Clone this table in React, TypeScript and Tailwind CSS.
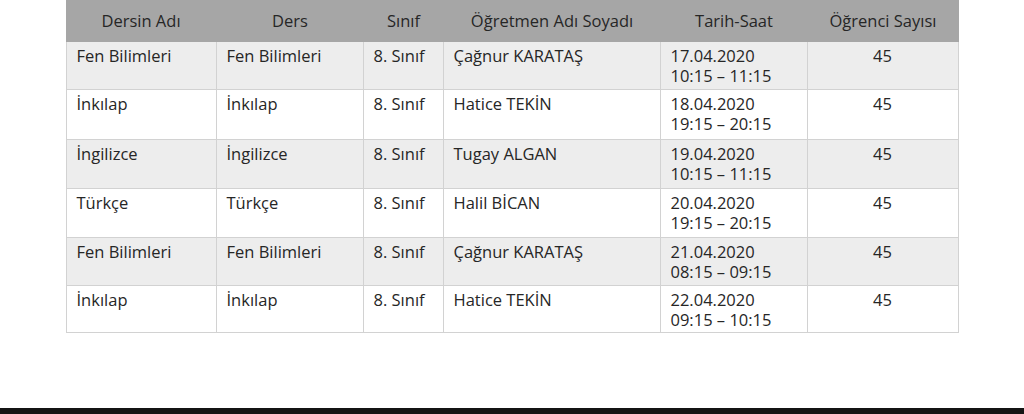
import React from "react";

const rows = [
  { a: "Fen Bilimleri", b: "Fen Bilimleri", t: "Çağnur KARATAŞ", d: "17.04.2020", h: "10:15 – 11:15", bg: "bg-[#ededed]", hh: "h-[48px]" },
  { a: "İnkılap", b: "İnkılap", t: "Hatice TEKİN", d: "18.04.2020", h: "19:15 – 20:15", bg: "bg-white", hh: "h-[50px]" },
  { a: "İngilizce", b: "İngilizce", t: "Tugay ALGAN", d: "19.04.2020", h: "10:15 – 11:15", bg: "bg-[#ededed]", hh: "h-[49px]" },
  { a: "Türkçe", b: "Türkçe", t: "Halil BİCAN", d: "20.04.2020", h: "19:15 – 20:15", bg: "bg-white", hh: "h-[49px]" },
  { a: "Fen Bilimleri", b: "Fen Bilimleri", t: "Çağnur KARATAŞ", d: "21.04.2020", h: "08:15 – 09:15", bg: "bg-[#ededed]", hh: "h-[48px]" },
  { a: "İnkılap", b: "İnkılap", t: "Hatice TEKİN", d: "22.04.2020", h: "09:15 – 10:15", bg: "bg-white", hh: "h-[47px]" },
];

const headers = ["Dersin Adı", "Ders", "Sınıf", "Öğretmen Adı Soyadı", "Tarih-Saat", "Öğrenci Sayısı"];

export default function App() {
  return (
    <div
      className="w-[1024px] h-[414px] bg-white flex flex-col text-[#262626] overflow-hidden"
      style={{ fontFamily: '"Open Sans", "Noto Sans", sans-serif' }}
    >
      <div className="flex-1">
        <div className="mx-auto w-[893px] text-[16.5px] leading-[20px]">
          <div className="grid grid-cols-[151px_147px_80px_217px_147px_151px] h-[42px] bg-[#a6a6a6]">
            {headers.map((h) => (
              <div key={h} className="flex items-center justify-center pb-[1px]">
                {h}
              </div>
            ))}
          </div>
          {rows.map((r, i) => (
            <div
              key={i}
              className={`grid grid-cols-[151px_147px_80px_217px_147px_151px] ${r.bg} ${r.hh}`}
            >
              <div className="border-l border-r border-b border-[#d2d2d2] pl-[10px] pt-[4px]">{r.a}</div>
              <div className="border-r border-b border-[#d2d2d2] pl-[10px] pt-[4px]">{r.b}</div>
              <div className="border-r border-b border-[#d2d2d2] pl-[10px] pt-[4px]">8. Sınıf</div>
              <div className="border-r border-b border-[#d2d2d2] pl-[10px] pt-[4px]">{r.t}</div>
              <div className="border-r border-b border-[#d2d2d2] pl-[10px] pt-[4px]">
                <div>{r.d}</div>
                <div>{r.h}</div>
              </div>
              <div className="border-r border-b border-[#d2d2d2] pt-[4px] text-center">45</div>
            </div>
          ))}
        </div>
      </div>
      <div className="h-[6px] bg-[#141414]" />
    </div>
  );
}
